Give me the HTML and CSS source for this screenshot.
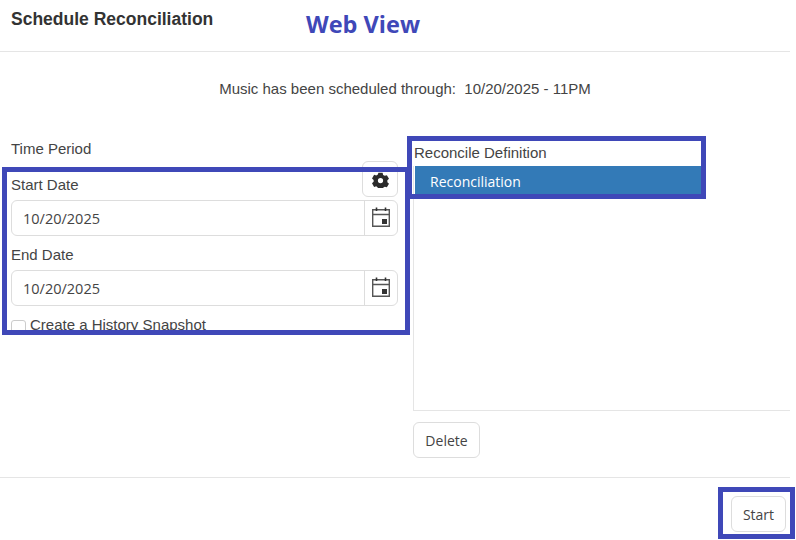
FILE: index.html
```html
<!DOCTYPE html>
<html>
<head>
   <meta http-equiv="Content-Type" content="text/html; charset=UTF-8" />
   <link rel="stylesheet" href="styles.css">
</head>
<body>

<div id="dialog">
    <div id="header">
        <h1>Schedule Reconciliation</h1>
    </div>

    <div id="through">Music has been scheduled through:&nbsp; 10/20/2025 - 11PM</div>

    <div id="columns">
        <div id="left">
            <div class="period-row">
                <div class="label period">Time Period</div>
                <button class="btn gear" type="button">
                    <svg width="17" height="17" viewBox="0 0 24 24"><path fill="#2b2b2b" fill-rule="evenodd" d="M9 1.500h6l.7 3 2.300 1.300 3-.9 3 5.200-2.300 2.100v2.600l2.300 2.100-3 5.200-3-.9-2.300 1.300-.7 3H9l-.7-3L6 20.700l-3 .9-3-5.200 2.300-2.100v-2.600L0 9.600l3-5.200 3 .9 2.300-1.300zM12 8.800a3.700 3.700 0 1 0 0 7.400 3.700 3.700 0 0 0 0-7.400z" transform="translate(0 1)"/></svg>
                </button>
            </div>

            <div class="label">Start Date</div>
            <div class="date-field">
                <div class="date-value">10/20/2025</div>
                <div class="date-icon">
                    <svg width="20" height="22" viewBox="0 0 20 22"><path fill="none" stroke="#555" stroke-width="1.400" d="M1.700 2.700h16.600v16.600H1.700zM1.700 7.500h16.600"/><path fill="none" stroke="#333" stroke-width="1.600" d="M5.500 .5V4M14.500 .5V4"/><rect x="11" y="12" width="5" height="5" fill="#333"/></svg>
                </div>
            </div>

            <div class="label end">End Date</div>
            <div class="date-field">
                <div class="date-value">10/20/2025</div>
                <div class="date-icon">
                    <svg width="20" height="22" viewBox="0 0 20 22"><path fill="none" stroke="#555" stroke-width="1.400" d="M1.700 2.700h16.600v16.600H1.700zM1.700 7.500h16.600"/><path fill="none" stroke="#333" stroke-width="1.600" d="M5.500 .5V4M14.500 .5V4"/><rect x="11" y="12" width="5" height="5" fill="#333"/></svg>
                </div>
            </div>

            <div class="snapshot">
                <span class="check"></span>
                <span class="label">Create a History Snapshot</span>
            </div>
        </div>

        <div id="right">
            <div class="label">Reconcile Definition</div>
            <div id="def-list">
                <div class="def selected">Reconciliation</div>
            </div>
            <button class="btn delete" type="button">Delete</button>
        </div>
    </div>

    <div id="footer">
        <button class="btn start" type="button">Start</button>
    </div>
</div>

<!-- annotations on top of the screenshot -->
<div class="note">Web View</div>
<div class="mark mark-dates"></div>
<div class="mark mark-def"></div>
<div class="mark mark-start"></div>

</body>
</html>
```

FILE: styles.css
```css
* {
    padding: 0; margin: 0;
    box-sizing: border-box;
}
body {
    background-color: #fff;
    font-family: "Liberation Sans", Arial, sans-serif;
    font-size: 15px;
    color: #333;
    width: 796px;
    height: 540px;
    overflow: hidden;
    position: relative;
}
button {
    font-family: "Open Sans", sans-serif;
}
div#dialog {
    width: 790px;
}
div#header {
    height: 52px;
    padding: 10px 11px 0;
    border-bottom: 1px solid #e5e5e5;
}
h1 {
    font-size: 17.500px;
    line-height: 18px;
    font-weight: bold;
    color: #333;
}
div#through {
    height: 36px;
    margin-top: 19px;
    padding-left: 20px;
    line-height: 36px;
    font-size: 15px;
    text-align: center;
    color: #444;
}
div#columns {
    display: grid;
    grid-template-columns: 398px 377px;
    column-gap: 15px;
    height: 353px;
    margin-top: 17px;
}
div#left {
    padding-left: 11px;
    padding-top: 16px;
}
div.period-row {
    display: flex;
    justify-content: space-between;
    height: 34px;
}
div.label, span.label {
    line-height: 18px;
    color: #444;
}
button.btn {
    background-color: #fff;
    border: 1px solid #ddd;
    border-radius: 6px;
    color: #444;
    font-size: 14px;
    height: 36px;
}
button.gear {
    width: 36px;
    margin-top: 21px;
    flex-shrink: 0;
    display: flex;
    align-items: center;
    justify-content: center;
}
div#left > div.label {
    margin-top: 2px;
    height: 18px;
}
div#left > div.end {
    margin-top: 10px;
}
div.date-field {
    display: flex;
    height: 36px;
    margin-top: 6px;
    border: 1px solid #ddd;
    border-radius: 6px;
}
div.date-value {
    flex: 1;
    padding-left: 11px;
    line-height: 35px;
    font-family: "Open Sans", sans-serif;
    font-size: 14.500px;
    color: #444;
}
div.date-icon {
    width: 33px;
    border-left: 1px solid #ddd;
    display: flex;
    align-items: center;
    justify-content: center;
}
div.snapshot {
    display: flex;
    align-items: center;
    gap: 4px;
    margin-top: 10px;
    height: 18px;
}
span.check {
    width: 15px;
    height: 15px;
    border: 1px solid #ccc;
    border-radius: 3px;
    margin-top: 5px;
}
div#right {
    padding-top: 20px;
}
div#right > div.label {
    line-height: 18px;
    height: 18px;
    margin-left: 1px;
}
div#def-list {
    height: 245px;
    margin-top: 4px;
    padding-left: 1px;
    border-left: 1px solid #e5e5e5;
    border-bottom: 1px solid #e5e5e5;
}
div.def {
    height: 30px;
    line-height: 32px;
    padding-left: 15px;
    font-family: "Open Sans", sans-serif;
    font-size: 14px;
}
div.selected {
    width: 288px;
    background-color: #337ab7;
    color: #fff;
}
button.delete {
    display: block;
    width: 67px;
    margin-top: 11px;
}
div#footer {
    height: 63px;
    border-top: 1px solid #e5e5e5;
    padding: 18px 4px 0 0;
    display: flex;
    justify-content: flex-end;
}
button.start {
    width: 55px;
}

div.note {
    position: absolute;
    left: 306px;
    top: 8px;
    font-family: "Open Sans", sans-serif;
    font-size: 23.500px;
    line-height: 32px;
    font-weight: bold;
    color: #3f48b8;
}
div.mark {
    position: absolute;
    border: 5px solid #3f48b8;
}
div.mark-dates {
    left: 2px;
    top: 167px;
    width: 408px;
    height: 168px;
}
div.mark-def {
    left: 407px;
    top: 136px;
    width: 299px;
    height: 63px;
}
div.mark-start {
    left: 718px;
    top: 487px;
    width: 77px;
    height: 52px;
}
```
